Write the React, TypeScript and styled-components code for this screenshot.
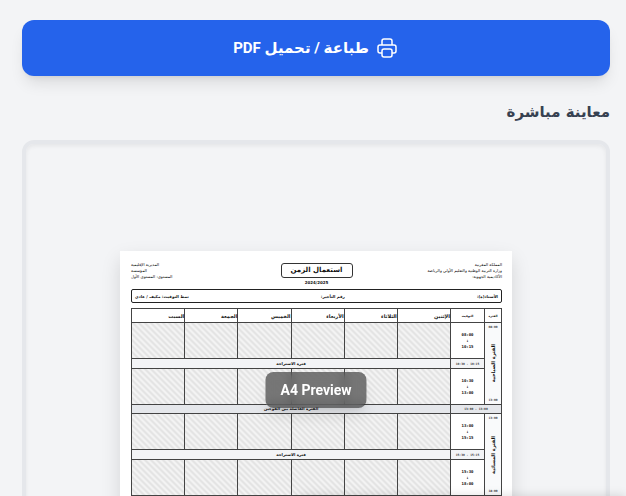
import React from "react";
import styled, { createGlobalStyle } from "styled-components";

const GlobalStyle = createGlobalStyle`
  *, *::before, *::after { box-sizing: border-box; }
  body {
    margin: 0;
    background: #f3f4f6;
    color: #111827;
    font-family: Roboto, "DejaVu Sans", sans-serif;
  }
`;

const Main = styled.main`
  position: relative;
  display: flex;
  flex-direction: column;
  height: 100vh;
  overflow: hidden;
  padding: 20px 16px 0 22px;
`;

const PrintButton = styled.button`
  flex: none;
  display: flex;
  align-items: center;
  justify-content: center;
  gap: 6px;
  width: 100%;
  height: 56px;
  border: 0;
  border-radius: 12px;
  background: #2563eb;
  color: #fff;
  font: 700 15px/24px Roboto, "DejaVu Sans", sans-serif;
  box-shadow: 0 10px 15px -3px rgba(0, 0, 0, 0.1), 0 4px 6px -4px rgba(0, 0, 0, 0.1);
  cursor: pointer;
`;

const Heading = styled.h2`
  flex: none;
  margin: 22px 0 14px;
  color: #374151;
  font: 700 15px/28px "DejaVu Sans", sans-serif;
`;

const Frame = styled.section`
  position: relative;
  flex: none;
  display: flex;
  align-items: center;
  justify-content: center;
  height: 500px;
  overflow: hidden;
  border: 4px solid #e5e7eb;
  border-radius: 12px;
  box-shadow: inset 0 2px 4px rgba(0, 0, 0, 0.06);
`;

const Badge = styled.div`
  position: absolute;
  top: 50%;
  left: 50%;
  transform: translate(-50%, -50%);
  padding: 6px 15px;
  border-radius: 8px;
  background: rgba(0, 0, 0, 0.5);
  backdrop-filter: blur(4px);
  color: #fff;
  font: 700 14px/24px Roboto, sans-serif;
  white-space: nowrap;
  box-shadow: 0 10px 15px -3px rgba(0, 0, 0, 0.1), 0 4px 6px -4px rgba(0, 0, 0, 0.1);
`;

const BottomPanel = styled.div`
  position: absolute;
  top: 100%;
  left: 300px;
  right: 0;
  height: 40px;
  box-shadow: 0 0 10px rgba(0, 0, 0, 0.14);
`;

const Sheet = styled.article`
  width: 392px;
  height: 278px;
  padding: 11px 10px 11px 11px;
  background: #fff;
  box-shadow: 0 8px 18px rgba(0, 0, 0, 0.13);
  color: #111;
  font: 700 4px/6px "DejaVu Sans", sans-serif;
`;

const SheetHeader = styled.header`
  display: grid;
  grid-template-columns: 1fr 72px 1fr;
  height: 27px;
`;

const Lines = styled.div<{ $end?: boolean }>`
  justify-self: ${(p) => (p.$end ? "end" : "start")};
  text-align: ${(p) => (p.$end ? "left" : "right")};
  color: #000;
  font-weight: 400;
  white-space: nowrap;
`;

const TitleBlock = styled.div`
  text-align: center;
`;

const Title = styled.h1`
  margin: 1px 0 2px;
  border: 1px solid #333;
  border-radius: 3px;
  font-size: 7px;
  line-height: 13px;
`;

const Info = styled.div`
  display: flex;
  justify-content: space-between;
  height: 14px;
  padding: 0 3px;
  border: 1px solid #222;
  border-radius: 2px;
  line-height: 13px;
`;

const Timetable = styled.table`
  width: 100%;
  margin-top: 5px;
  border-collapse: collapse;
  table-layout: fixed;

  th, td {
    padding: 0;
    border: 1px solid #444;
    text-align: center;
    line-height: 6px;
  }
`;

const PeriodCol = styled.col`width: 17px;`;
const TimeCol = styled.col`width: 34px;`;

const HeadRow = styled.tr`height: 14px;`;
const DayHead = styled.th`&& { text-align: right; font-size: 5px; }`;
const SmallHead = styled.th`font-size: 3px; color: #000;`;

const LessonRow = styled.tr`height: 36px;`;
const BreakRow = styled.tr<{ $major?: boolean }>`
  height: ${(p) => (p.$major ? "9px" : "10px")};
  background: ${(p) => (p.$major ? "#e5e7eb" : "#f3f4f6")};
`;

const Slot = styled.td`
  background: linear-gradient(45deg, #e3e3e3 25%, #f4f4f4 25% 50%, #e3e3e3 50% 75%, #f4f4f4 75%) 0 0 / 6px 6px;
`;

const Hours = styled.td`
  font-family: "DejaVu Sans Mono", monospace;
  font-size: 4px;
`;

const BreakHours = styled.td`
  color: #333;
  font-family: "DejaVu Sans Mono", monospace;
  font-size: 3px;
`;

const Period = styled.td`background: #f9fafb;`;

const PeriodInner = styled.div`
  display: flex;
  flex-direction: column;
  align-items: center;
  justify-content: space-between;
  height: 80px;
  color: #333;
  font: 700 3px/7px "DejaVu Sans Mono", monospace;
`;

const PeriodName = styled.span`
  writing-mode: vertical-rl;
  transform: rotate(180deg);
  color: #111;
  font: 700 5px/10px "DejaVu Sans", sans-serif;
  white-space: nowrap;
`;

const days = ["الإثنين", "الثلاثاء", "الأربعاء", "الخميس", "الجمعة", "السبت"];

const halves = [
  { name: "الفترة الصباحية", start: "08:00", end: "13:00", first: ["08:00", "10:15"], second: ["10:30", "13:00"], rest: "10:15 - 10:30" },
  { name: "الفترة المسائية", start: "13:00", end: "18:00", first: ["13:00", "15:15"], second: ["15:30", "18:00"], rest: "15:15 - 15:30" },
];

function PrinterIcon() {
  return (
    <svg width="24" height="24" viewBox="0 0 24 24" fill="none" stroke="currentColor" strokeWidth="1.5" strokeLinecap="round" strokeLinejoin="round" aria-hidden="true">
      <path d="M17 17h2a2 2 0 0 0 2-2v-4a2 2 0 0 0-2-2H5a2 2 0 0 0-2 2v4a2 2 0 0 0 2 2h2m2 4h6a2 2 0 0 0 2-2v-4a2 2 0 0 0-2-2H9a2 2 0 0 0-2 2v4a2 2 0 0 0 2 2zm8-12V5a2 2 0 0 0-2-2H9a2 2 0 0 0-2 2v4h10z" />
    </svg>
  );
}

function Lesson({ hours }: { hours: string[] }) {
  return (
    <>
      <Hours>{hours[0]}<br />↓<br />{hours[1]}</Hours>
      {days.map((day) => <Slot key={day} />)}
    </>
  );
}

export default function App() {
  return (
    <Main dir="rtl" lang="ar">
      <GlobalStyle />
      <PrintButton type="button"><PrinterIcon />طباعة / تحميل PDF</PrintButton>
      <Heading>معاينة مباشرة</Heading>
      <Frame>
        <Sheet>
          <SheetHeader>
            <Lines>المملكة المغربية<br />وزارة التربية الوطنية والتعليم الأولي والرياضة<br />الأكاديمية الجهوية:</Lines>
            <TitleBlock><Title>استعمال الزمن</Title>2024/2025</TitleBlock>
            <Lines $end>المديرية الإقليمية<br />المؤسسة<br />المستوى: المستوى الأول</Lines>
          </SheetHeader>
          <Info>
            <span>الأستاذ(ة):</span>
            <span>رقم التأجير:</span>
            <span>نمط التوقيت: مكيف / عادي</span>
          </Info>
          <Timetable>
            <colgroup><PeriodCol /><TimeCol />{days.map((day) => <col key={day} />)}</colgroup>
            <thead>
              <HeadRow>
                <SmallHead>الفترة</SmallHead>
                <SmallHead>التوقيت</SmallHead>
                {days.map((day) => <DayHead key={day}>{day}</DayHead>)}
              </HeadRow>
            </thead>
            <tbody>
              {halves.map((half, index) => (
                <React.Fragment key={half.name}>
                  {index === 1 && (
                    <BreakRow $major>
                      <BreakHours colSpan={2}>13:00 - 13:00</BreakHours>
                      <td colSpan={6}>الفترة الفاصلة بين الفوجين</td>
                    </BreakRow>
                  )}
                  <LessonRow>
                    <Period rowSpan={3}>
                      <PeriodInner><span>{half.start}</span><PeriodName>{half.name}</PeriodName><span>{half.end}</span></PeriodInner>
                    </Period>
                    <Lesson hours={half.first} />
                  </LessonRow>
                  <BreakRow>
                    <BreakHours>{half.rest}</BreakHours>
                    <td colSpan={6}>فترة الاستراحة</td>
                  </BreakRow>
                  <LessonRow><Lesson hours={half.second} /></LessonRow>
                </React.Fragment>
              ))}
            </tbody>
          </Timetable>
        </Sheet>
        <Badge dir="ltr">A4 Preview</Badge>
      </Frame>
      <BottomPanel />
    </Main>
  );
}
